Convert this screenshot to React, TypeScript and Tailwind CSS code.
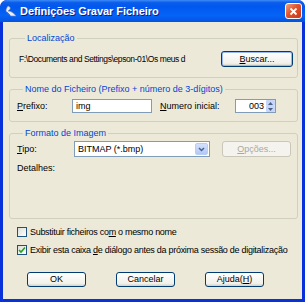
import React from "react";

const font = { fontFamily: '"Liberation Sans", Arial, sans-serif' };

function XPButton({ children, disabled, className = "" }: { children: React.ReactNode; disabled?: boolean; className?: string }) {
  return (
    <div
      className={
        "flex items-center justify-center rounded-[3px] border text-[9px] leading-none " +
        (disabled
          ? "border-[#C9C7BA] bg-[#F4F3EE] text-[#ACA899] "
          : "border-[#003C74] bg-[linear-gradient(#FFFFFF,#F1F0EA_80%,#D6D0C5)] text-black ") +
        className
      }
    >
      {children}
    </div>
  );
}

function Checkbox({ checked }: { checked?: boolean }) {
  return (
    <div className="w-[10px] h-[10px] border border-[#1C5180] bg-[linear-gradient(135deg,#DCDCD7,#FFFFFF)] flex items-center justify-center shrink-0">
      {checked && (
        <svg width="8" height="8" viewBox="0 0 8 8">
          <path d="M1 4 L3 6 L7 1.5" stroke="#21A121" strokeWidth="1.6" fill="none" />
        </svg>
      )}
    </div>
  );
}

export default function App() {
  return (
    <div style={font} className="w-[305px] h-[302px] bg-[#0831D9] rounded-t-[7px] flex flex-col overflow-hidden">
      {/* Title bar */}
      <div className="h-[22px] shrink-0 flex items-center rounded-t-[7px] bg-[linear-gradient(#3C8CF8_0%,#0A5CEB_12%,#0058EE_30%,#0563F6_70%,#0453E0_100%)] pl-[5px] pr-[3px]">
        <svg width="12" height="12" viewBox="0 0 12 12" className="shrink-0">
          <path d="M3 1 C6 2 6 4 3 6 C6 6 9 8 11 11 L6 11 C4 9 2 8 1 6 C1 4 2 2 3 1 Z" fill="#E8ECF4" stroke="#7C8AA8" strokeWidth="0.6" />
          <path d="M2 7 L5 10" stroke="#4B78C8" strokeWidth="1" />
        </svg>
        <span className="ml-[3px] text-white font-bold text-[11px] leading-none tracking-[-0.05px]" style={{ textShadow: "1px 1px 0 #0A1E8A" }}>
          Definições Gravar Ficheiro
        </span>
        <div className="ml-auto w-[17px] h-[16px] rounded-[3px] border border-white bg-[linear-gradient(135deg,#F0A080,#E0522C_45%,#C8381A)] flex items-center justify-center">
          <svg width="9" height="9" viewBox="0 0 9 9">
            <path d="M1.5 1.5 L7.5 7.5 M7.5 1.5 L1.5 7.5" stroke="white" strokeWidth="1.8" />
          </svg>
        </div>
      </div>

      {/* Body */}
      <div className="flex-1 mx-[3px] mb-[3px] bg-[#ECE9D8] flex flex-col pl-[6px] pr-[4px] pt-[11px] text-[9px] text-black leading-[10px]">
        {/* Group 1 */}
        <fieldset className="border border-[#D0D0BF] rounded-[3px] h-[45px] pl-[9px] pr-[4px]">
          <legend className="ml-[6px] px-[2px] text-[#0046D5] leading-[10px]">Localização</legend>
          <div className="flex items-center mt-[8px]">
            <span className="text-[8.5px] tracking-[-0.4px]">F:\Documents and Settings\epson-01\Os meus d</span>
            <XPButton className="ml-auto w-[72px] h-[16px] shadow-[inset_0_0_0_1px_#98B8F0]">
              <span><u>B</u>uscar...</span>
            </XPButton>
          </div>
        </fieldset>

        {/* Group 2 */}
        <fieldset className="border border-[#D0D0BF] rounded-[3px] h-[38px] mt-[6px] pl-[7px] pr-[4px]">
          <legend className="ml-[6px] px-[2px] text-[#0046D5] leading-[10px]">Nome do Ficheiro (Prefixo + número de 3-dígitos)</legend>
          <div className="flex items-center mt-[5px]">
            <span className="w-[55px]"><u>P</u>refixo:</span>
            <div className="w-[80px] h-[14px] border border-[#7F9DB9] bg-white flex items-center pl-[3px]">img</div>
            <span className="ml-[8px] w-[75px]"><u>N</u>umero inicial:</span>
            <div className="w-[41px] h-[14px] border border-[#7F9DB9] bg-white flex items-center justify-end">
              <span className="mr-[2px]">003</span>
              <div className="w-[9px] h-[12px] flex flex-col gap-[0px]">
                <div className="flex-1 bg-[#C6D6FB] rounded-[1px] flex items-center justify-center">
                  <svg width="5" height="3" viewBox="0 0 5 3"><path d="M0 3 L2.5 0 L5 3 Z" fill="#4D6185" /></svg>
                </div>
                <div className="flex-1 bg-[#C6D6FB] rounded-[1px] flex items-center justify-center">
                  <svg width="5" height="3" viewBox="0 0 5 3"><path d="M0 0 L2.5 3 L5 0 Z" fill="#4D6185" /></svg>
                </div>
              </div>
            </div>
          </div>
        </fieldset>

        {/* Group 3 */}
        <fieldset className="border border-[#D0D0BF] rounded-[3px] h-[91px] mt-[6px] pl-[7px] pr-[6px]">
          <legend className="ml-[6px] px-[2px] text-[#0046D5] leading-[10px]">Formato de Imagem</legend>
          <div className="flex items-center mt-[3px]">
            <span className="w-[57px]"><u>T</u>ipo:</span>
            <div className="w-[136px] h-[16px] border border-[#7F9DB9] bg-white flex items-center pl-[3px]">
              <span>BITMAP (*.bmp)</span>
              <div className="ml-auto mr-[1px] w-[13px] h-[12px] rounded-[2px] bg-[linear-gradient(#D4E0FD,#B1C9F7)] border border-[#B9CDF8] flex items-center justify-center">
                <svg width="7" height="5" viewBox="0 0 7 5"><path d="M1 1 L3.5 3.5 L6 1" stroke="#4D6185" strokeWidth="1.5" fill="none" /></svg>
              </div>
            </div>
            <XPButton disabled className="ml-auto w-[69px] h-[16px]">
              <span><u>O</u>pções...</span>
            </XPButton>
          </div>
          <div className="mt-[6px]">Detalhes:</div>
        </fieldset>

        {/* Checkboxes */}
        <div className="flex items-center mt-[8px] pl-[8px]">
          <Checkbox />
          <span className="ml-[3px] tracking-[-0.3px]">Substituir ficheiros co<u>m</u> o mesmo nome</span>
        </div>
        <div className="flex items-center mt-[8px] pl-[8px]">
          <Checkbox checked />
          <span className="ml-[3px] tracking-[-0.28px]">Exibir esta caixa <u>d</u>e diálogo antes da próxima sessão de digitalização</span>
        </div>

        {/* Buttons */}
        <div className="flex mt-[17px] pl-[18px] gap-[30px]">
          <XPButton className="w-[59px] h-[15px]">OK</XPButton>
          <XPButton className="w-[59px] h-[15px]">Cancelar</XPButton>
          <XPButton className="w-[59px] h-[15px]">Ajuda(<u>H</u>)</XPButton>
        </div>
      </div>
    </div>
  );
}
